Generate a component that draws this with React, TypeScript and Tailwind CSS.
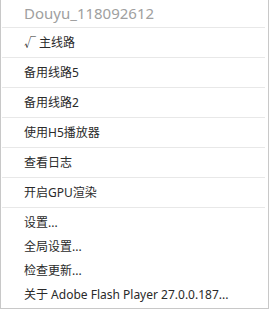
import React from "react";

const font = { fontFamily: '"Noto Sans", "Noto Sans CJK SC", sans-serif' };

function Sep() {
  return <div className="h-px bg-[#e8e8e8] ml-[1px] mr-[3px]" />;
}

function Row({ children }: { children: React.ReactNode }) {
  return (
    <div className="h-[29px] flex items-center pl-[23px] text-[12px] text-[#2a2a2a]">{children}</div>
  );
}

function Small({ children }: { children: React.ReactNode }) {
  return (
    <div className="h-[24px] flex items-center pl-[23px] text-[12px] text-[#2a2a2a]">{children}</div>
  );
}

export default function App() {
  return (
    <div
      style={font}
      className="w-[269px] h-[309px] bg-white border-l border-r border-b border-[#c8c8c8] flex flex-col leading-none"
    >
      <div className="h-[27px] flex items-center pl-[23px] text-[15px] text-[#a0a0a0]">Douyu_118092612</div>
      <Sep />
      <Row>√ 主线路</Row>
      <Sep />
      <Row>备用线路5</Row>
      <Sep />
      <Row>备用线路2</Row>
      <Sep />
      <Row>使用H5播放器</Row>
      <Sep />
      <Row>查看日志</Row>
      <Sep />
      <Row>开启GPU渲染</Row>
      <Sep />
      <div className="pt-[3px]">
        <Small>设置...</Small>
        <Small>全局设置...</Small>
        <Small>检查更新...</Small>
        <Small>关于 Adobe Flash Player 27.0.0.187...</Small>
      </div>
    </div>
  );
}
